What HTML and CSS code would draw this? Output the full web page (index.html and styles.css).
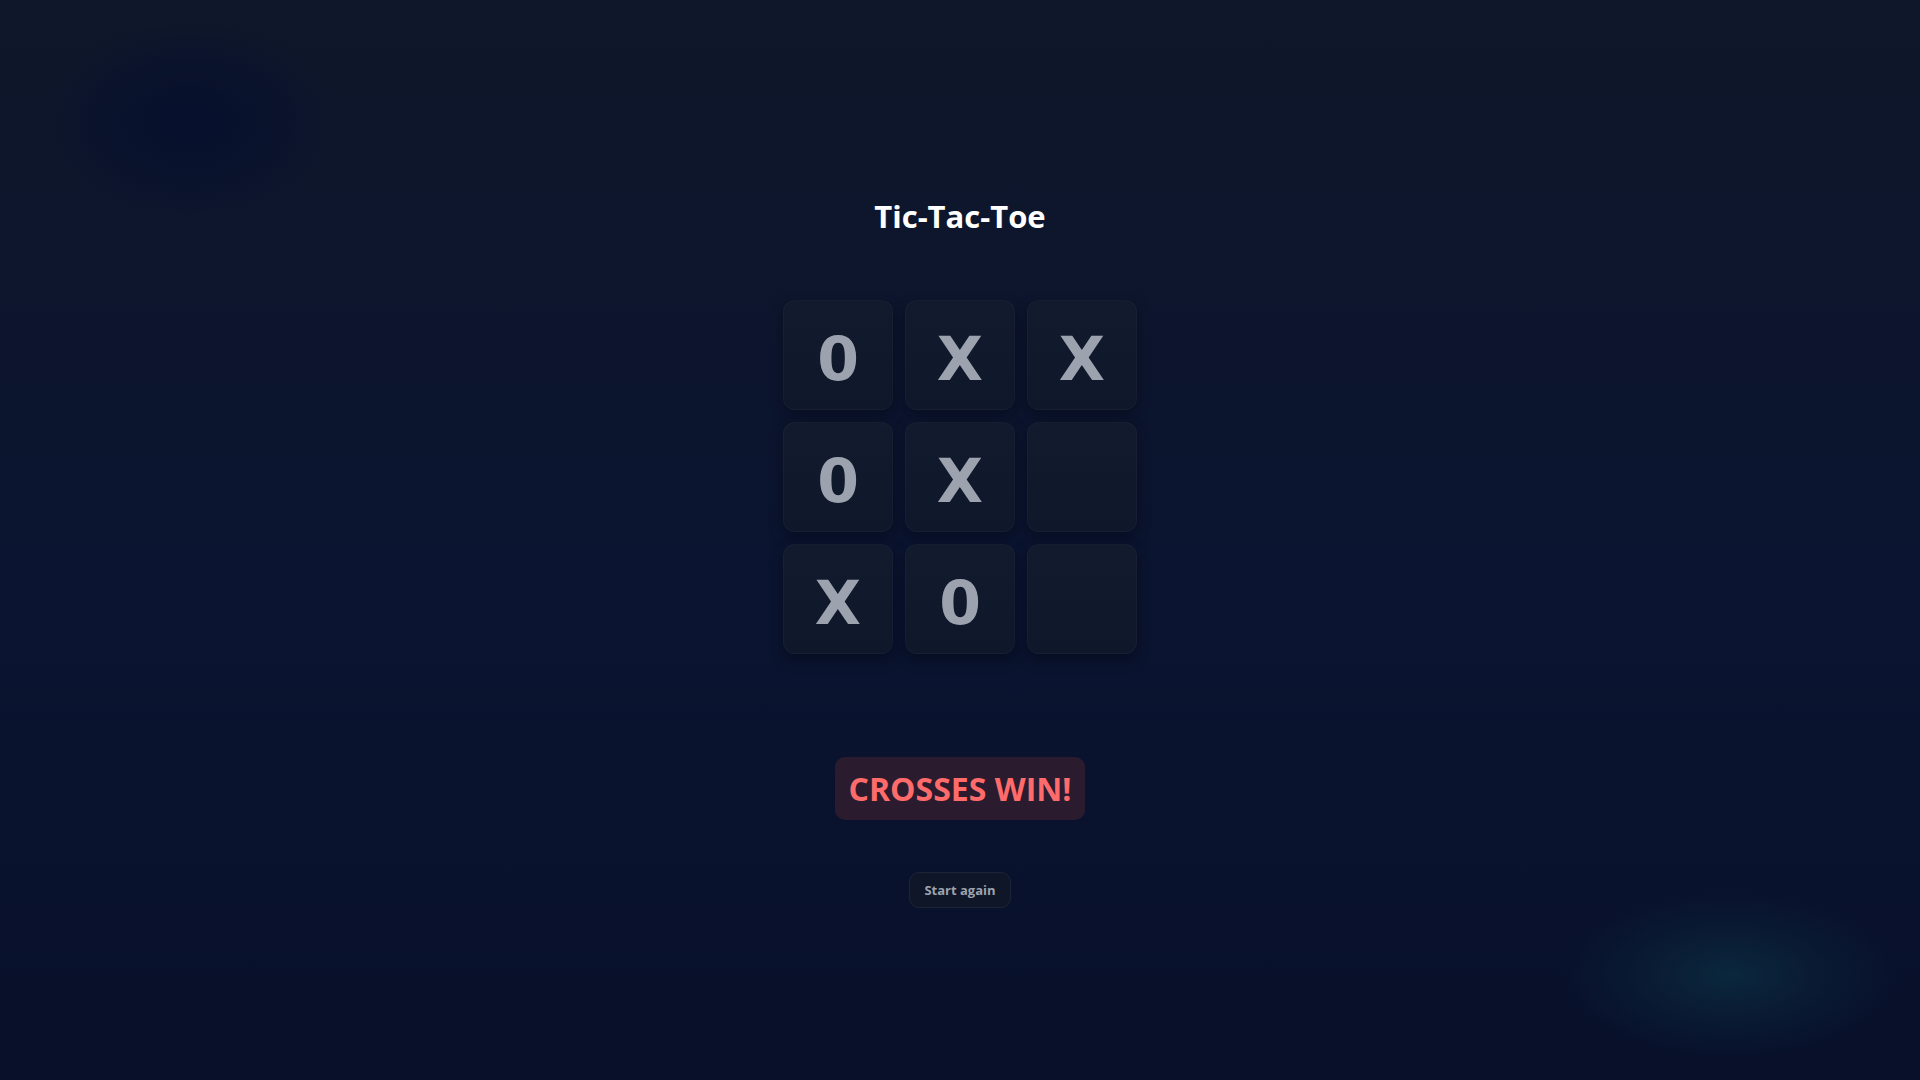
FILE: index.html
```html
<!DOCTYPE html>
<html lang="en">
<head>
<meta charset="utf-8">
<title>Tic-Tac-Toe</title>
<link rel="stylesheet" href="styles.css">
</head>
<body>
<div class="glow glow-tl"></div>
<div class="glow glow-br"></div>
<main class="app">
  <h1 class="title">Tic-Tac-Toe</h1>
  <div class="board">
    <div class="cell">0</div>
    <div class="cell">X</div>
    <div class="cell">X</div>
    <div class="cell">0</div>
    <div class="cell">X</div>
    <div class="cell"></div>
    <div class="cell">X</div>
    <div class="cell">0</div>
    <div class="cell"></div>
  </div>
  <div class="result">CROSSES WIN!</div>
  <button class="restart">Start again</button>
</main>
</body>
</html>
```
FILE: styles.css
```css
* { box-sizing: border-box; }
html, body { height: 100%; }
body {
  margin: 0;
  min-height: 100vh;
  background: linear-gradient(180deg, #0f172a 0%, #0b1430 55%, #08102a 100%);
  font-family: "Open Sans", "Noto Sans", sans-serif;
  overflow: hidden;
  position: relative;
}
.glow {
  position: absolute;
  border-radius: 50%;
  pointer-events: none;
}
.glow-tl {
  left: 40px; top: 20px;
  width: 300px; height: 200px;
  background: radial-gradient(ellipse at center, rgba(5,14,45,0.8) 0%, rgba(5,14,45,0.45) 40%, rgba(5,14,45,0) 70%);
}
.glow-br {
  left: 1560px; top: 890px;
  width: 340px; height: 170px;
  background: radial-gradient(ellipse at center, rgba(10,45,65,0.8) 0%, rgba(10,38,60,0.4) 40%, rgba(10,38,60,0) 70%);
}
.app {
  position: relative;
  display: flex;
  flex-direction: column;
  align-items: center;
  padding-top: 195px;
}
.title {
  margin: 0;
  color: #ffffff;
  font-size: 31px;
  font-weight: 700;
  line-height: 42px;
  letter-spacing: 0;
}
.board {
  margin-top: 63px;
  display: grid;
  grid-template-columns: repeat(3, 110px);
  grid-auto-rows: 110px;
  gap: 12px;
}
.cell {
  border-radius: 12px;
  background: linear-gradient(180deg, #121a2d 0%, #0f172a 100%);
  border: 1px solid rgba(148,163,184,0.05);
  box-shadow: 0 6px 14px rgba(2,6,20,0.45);
  display: flex;
  align-items: center;
  justify-content: center;
  padding-top: 8px;
  color: #9ca3af;
  font-family: "DejaVu Sans", Verdana, sans-serif;
  font-weight: 700;
  font-size: 60px;
}
.result {
  margin-top: 103px;
  height: 63px;
  padding: 0 14px;
  display: flex;
  align-items: center;
  border-radius: 10px;
  background: #2a1c2e;
  color: #ff6b6b;
  font-size: 32px;
  font-weight: 700;
  letter-spacing: 0;
}
.restart {
  margin-top: 52px;
  height: 36px;
  padding: 0 14px;
  border-radius: 10px;
  border: 1px solid #1c2538;
  background: #0e1628;
  color: #9ca3af;
  font-family: "Open Sans", "Noto Sans", sans-serif;
  font-size: 13px;
  font-weight: 700;
}
```
